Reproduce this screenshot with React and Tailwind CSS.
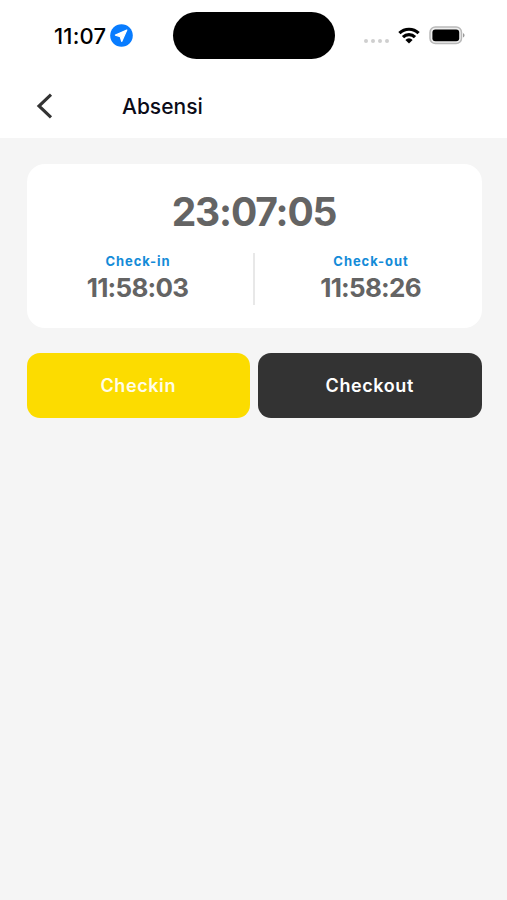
function StatusBar() {
  return (
    <header className="flex h-[71px] shrink-0 items-center">
      <div className="ml-[54px] flex w-[119px] items-center">
        <span className="w-[53px] text-[22px] leading-7 font-medium tracking-[0.2px] whitespace-nowrap text-black">11:07</span>
        <svg className="ml-[2.6px] h-[23px] w-[23px] shrink-0" viewBox="0 0 23 23">
          <circle cx="11.5" cy="11.5" r="11.3" fill="#087cff" />
          <path d="M16.8 6.1 5.4 11.1l4.8 1.5 1.5 4.8Z" fill="#fff" stroke="#fff" strokeWidth="1.2" strokeLinejoin="round" />
        </svg>
      </div>
      <div className="h-[47px] w-[162px] rounded-full bg-black" />
      <div className="ml-[29px] flex items-center">
        <div className="mt-[11px] flex gap-[2.6px]">
          <i className="h-[4.4px] w-[4.4px] rounded-full bg-[#cfcfcf]" />
          <i className="h-[4.4px] w-[4.4px] rounded-full bg-[#cfcfcf]" />
          <i className="h-[4.4px] w-[4.4px] rounded-full bg-[#cfcfcf]" />
          <i className="h-[4.4px] w-[4.4px] rounded-full bg-[#cfcfcf]" />
        </div>
        <svg className="ml-[9px] h-[17px] w-[22px]" viewBox="0 0 22 17">
          <g fill="none" stroke="#000" strokeWidth="3.2">
            <path d="M1.4 6.2a13.6 13.6 0 0 1 19.2 0" />
            <path d="M5 10.1a8.5 8.5 0 0 1 12 0" />
          </g>
          <path d="M7.4 12.9a5 5 0 0 1 7.2 0L11 16.6Z" fill="#000" />
        </svg>
        <svg className="ml-[9px] h-[19px] w-[37px]" viewBox="0 0 37 19">
          <rect x="1" y="1" width="31.5" height="16.6" rx="5.4" fill="#eee" stroke="#b9b9b9" strokeWidth="1.5" />
          <rect x="3.4" y="3.4" width="26.8" height="11.8" rx="3" fill="#000" />
          <path d="M34 7.3c2 .7 2 3.5 0 4.2Z" fill="#999" />
        </svg>
      </div>
    </header>
  );
}

function TimeEntry({ label, time }) {
  return (
    <div className="flex w-[222px] flex-col items-center">
      <span className="ml-px text-[13px] leading-[17px] font-bold tracking-[0.95px] text-[#138bd8]">{label}</span>
      <span className="mt-[2px] text-[26px] leading-[31px] font-bold tracking-[-0.75px] text-[#646464]">{time}</span>
    </div>
  );
}

export default function App() {
  return (
    <div className="flex h-[900px] w-[507px] flex-col overflow-hidden bg-[#f5f5f5] font-['Inter',sans-serif]">
      <div className="h-[138px] shrink-0 bg-white">
        <StatusBar />
        <nav className="flex h-[69px] items-center">
          <svg className="ml-[36px] h-[26px] w-[18px]" viewBox="0 0 18 26">
            <path d="M15 1.7 3 13l12 11.3" fill="none" stroke="#333" strokeWidth="3.1" />
          </svg>
          <h1 className="mt-[3px] ml-[68px] text-[21px] leading-7 font-medium text-[#0b0b18]">Absensi</h1>
        </nav>
      </div>
      <main className="pr-[25.5px] pl-[26.5px] pt-[26px]">
        <section className="h-[164px] rounded-[18px] bg-white pt-[23px]">
          <p className="text-center text-[39px] leading-[49px] font-bold tracking-[-1.15px] text-[#646464]">23:07:05</p>
          <div className="mt-[17px] flex h-[52px] justify-between">
            <TimeEntry label="Check-in" time="11:58:03" />
            <div className="w-[1.5px] bg-[#e8e8e8]" />
            <TimeEntry label="Check-out" time="11:58:26" />
          </div>
        </section>
        <div className="mt-[25px] flex gap-2">
          <button className="h-[65px] flex-1 rounded-[13px] bg-[#fcdc00] text-[18px] font-semibold tracking-[0.6px] text-[#fffde8]">Checkin</button>
          <button className="h-[65px] flex-1 rounded-[13px] bg-[#333333] text-[18px] font-semibold tracking-[0.6px] text-white">Checkout</button>
        </div>
      </main>
    </div>
  );
}
